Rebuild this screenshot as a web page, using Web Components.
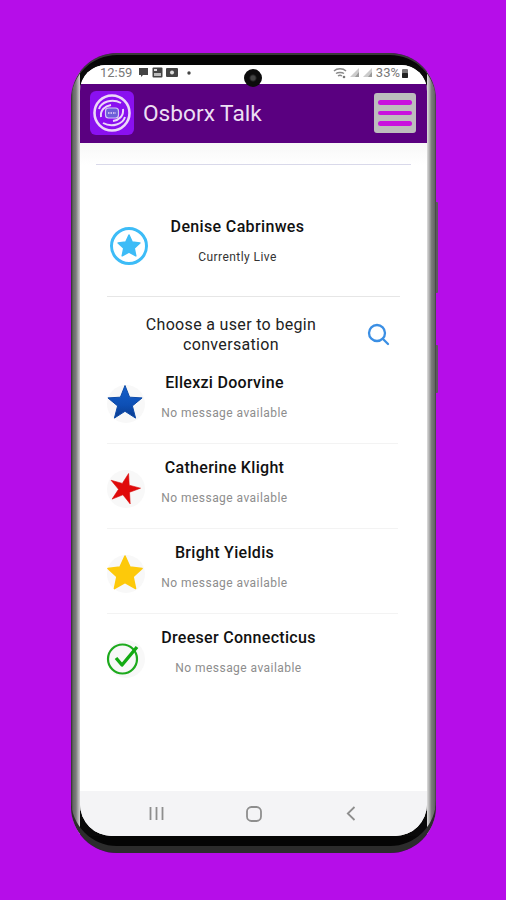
<!DOCTYPE html>
<html><head><meta charset="utf-8"><style>
html,body{margin:0;height:900px;overflow:hidden;background:#b60de9;font-family:Roboto,"Liberation Sans",sans-serif}
body{padding-top:53px;box-sizing:border-box;display:flex;justify-content:center}
</style></head><body>
<phone-frame>
  <status-bar slot="status"></status-bar>
  <app-bar slot="appbar" title="Osborx Talk"></app-bar>
  <live-row name="Denise Cabrinwes" status="Currently Live"></live-row>
  <choose-row>Choose a user to begin conversation</choose-row>
  <user-row name="Ellexzi Doorvine" icon="blue"></user-row>
  <user-row name="Catherine Klight" icon="red"></user-row>
  <user-row name="Bright Yieldis" icon="yellow"></user-row>
  <user-row name="Dreeser Connecticus" icon="check" last></user-row>
  <nav-bar slot="nav"></nav-bar>
</phone-frame>
<script>
const def=(n,html)=>customElements.define(n,class extends HTMLElement{
  connectedCallback(){if(this.shadowRoot)return;const r=this.attachShadow({mode:'open'});r.innerHTML=typeof html==='function'?html(this):html;}
});
const star=(cx,cy,R,r,rot=0)=>{let p=[];for(let i=0;i<10;i++){const a=(-90+rot+36*i)*Math.PI/180,q=i%2?r:R;p.push((cx+q*Math.cos(a)).toFixed(1)+','+(cy+q*Math.sin(a)).toFixed(1));}return p.join(' ');};
def('phone-frame',`<style>
:host{display:block;width:365px;height:800px;position:relative;margin-left:1px}
.body{box-sizing:border-box;width:365px;height:800px;border-radius:46px;padding:12px 9px 17px;
background:
 linear-gradient(90deg,transparent 8px,#050505 34px,#050505 331px,transparent 357px) top/100% 12px no-repeat,
 linear-gradient(90deg,transparent 8px,#050505 34px,#050505 331px,transparent 357px) bottom/100% 17px no-repeat,
 linear-gradient(90deg,#2e2e2e 0,#666 2px,#7c7c7c 5px,#aaa 7px,#d4d4d4 9px,#0a0a0a 9.5px) left/50% 100% no-repeat,
 linear-gradient(270deg,#2e2e2e 0,#666 2px,#7c7c7c 5px,#aaa 7px,#d4d4d4 9px,#0a0a0a 9.5px) right/50% 100% no-repeat;
 box-shadow:inset 0 2px 0 #3a3a3a,inset 0 -7px 0 #2c2c2c}
.screen{width:347px;height:771px;border-radius:26px 26px 32px 32px;overflow:hidden;background:#fff;display:flex;flex-direction:column;position:relative}
main{flex:1;display:flex;flex-direction:column;min-height:0}
.cam{position:absolute;left:164px;top:4px;width:18px;height:18px;border-radius:50%;background:radial-gradient(circle,#444 0 2px,#0c0c0c 4px);z-index:2}
.btn{position:absolute;left:365px;width:2px;background:#5b5b5b;border-radius:0 1px 1px 0}
</style>
<div class="btn" style="top:149px;height:91px"></div><div class="btn" style="top:292px;height:48px"></div>
<div class="body"><div class="screen"><div class="cam"></div>
<slot name="status"></slot><slot name="appbar"></slot><main><slot></slot></main><slot name="nav"></slot></div></div>`);
def('status-bar',`<style>
:host{display:flex;align-items:center;height:19px;box-sizing:border-box;background:#fff;padding:0 19px 4px 20px;font:13px Roboto,sans-serif;color:#777;flex:none}
.ic{display:flex;gap:3px;margin-left:6px;align-items:center}
.sp{flex:1}
.r{display:flex;gap:2px;align-items:center}
svg{display:block}
</style>
<span>12:59</span>
<span class="ic">
<svg width="11" height="11" viewBox="0 0 11 11"><path d="M1 1h9v7H5L3 10V8H1z" fill="#444"/></svg>
<svg width="11" height="11" viewBox="0 0 11 11"><rect x="0.5" y="0.5" width="10" height="10" rx="1" fill="#444"/><rect x="2" y="2" width="3" height="2" fill="#ddd"/><rect x="2" y="6" width="7" height="3" fill="#bbb"/></svg>
<svg width="12" height="11" viewBox="0 0 12 11"><rect y="1" width="12" height="9" rx="1" fill="#444"/><circle cx="6" cy="5.5" r="2" fill="#ddd"/></svg>
<svg style="margin-left:6px" width="4" height="4"><circle cx="2" cy="2" r="1.7" fill="#444"/></svg>
</span>
<span class="sp"></span>
<span class="r">
<svg width="14" height="12" viewBox="0 0 14 12"><path d="M1 4C4 1 10 1 13 4M3 6.5C5 5 9 5 11 6.5M5 9C6 8.300 8 8.300 9 9" stroke="#888" stroke-width="1.500" fill="none"/><circle cx="11" cy="10" r="1.300" fill="#777"/></svg>
<svg width="11" height="11" viewBox="0 0 11 11"><path d="M10 1v9H1z" fill="#ccc"/><path d="M10 5v5H6z" fill="#999"/></svg>
<svg width="11" height="11" viewBox="0 0 11 11"><path d="M10 1v9H1z" fill="#ccc"/><path d="M10 5v5H6z" fill="#999"/></svg>
<span style="margin-left:1px">33%</span>
<svg width="6" height="10" viewBox="0 0 6 10"><rect x="0" y="1" width="6" height="9" rx="1" fill="#777"/><rect x="0" y="5" width="6" height="5" rx="1" fill="#222"/></svg>
</span>`);
def('app-bar',h=>`<style>
:host{display:flex;align-items:center;height:59px;background:#5a0080;padding:0 11px 0 10px;flex:none;box-sizing:border-box}
.logo{width:44px;height:44px;border-radius:6px;background:#8a10f0;display:flex;align-items:center;justify-content:center;flex:none;margin-top:-1px}
h1{font:400 22.7px Roboto,sans-serif;color:#ecdff3;margin:0 0 0 9px;flex:1}
.menu{width:42px;height:40px;border-radius:3px;background:#bdbdbd;display:flex;flex-direction:column;justify-content:center;gap:6px;padding:0 4px;box-sizing:border-box;margin-top:-1px}
.menu i{display:block;height:4.500px;border-radius:3px;background:#c911de}
</style>
<div class="logo"><svg width="40" height="40" viewBox="0 0 40 40" fill="none" stroke="#ecd8f8">
<circle cx="20" cy="20" r="17.500" stroke-width="2.600"/>
<path d="M7 16C9 9 20 5 29 10" stroke-width="2"/>
<path d="M33 24C31 31 20 35 11 30" stroke-width="2"/>
<path d="M9 24C8 17 13 13 19 12" stroke-width="2"/><path d="M31 16C32 23 27 27 21 28" stroke-width="2"/>
<rect x="13.500" y="15" width="13" height="10" rx="3" fill="#6d5fd8" stroke="#d6c9f5" stroke-width="1.200"/>
<path d="M16 20h8" stroke="#e9d3f7" stroke-width="1.500" stroke-dasharray="1.500 1"/></svg></div>
<h1>${h.getAttribute('title')}</h1>
<div class="menu"><i></i><i></i><i></i></div>`);
def('live-row',h=>`<style>
:host{display:block;flex:none;background:linear-gradient(#f7f7f7,#fff 22px)}
.rule{height:21px;margin:0 16px 0 16px;border-bottom:1px solid #d9d9ea}
.row{display:flex;margin:0 27px 0 27px;height:131px;border-bottom:1px solid #e6e6e6;align-items:flex-start}
svg{display:block;margin:61px 0 0 2px;flex:none}
.t{flex:1;text-align:center;padding:0 74px 0 0}
.n{font:500 16px/20px Roboto,sans-serif;color:#111;margin-top:52px;letter-spacing:.35px}
.s{font:400 12px/16px Roboto,sans-serif;color:#333;margin-top:12px;letter-spacing:.45px}
</style>
<div class="rule"></div>
<div class="row"><svg width="40" height="40" viewBox="0 0 40 40"><circle cx="20" cy="20" r="17.500" fill="#fff" stroke="#3dbcf7" stroke-width="3"/><polygon points="${star(20,20.500,11.500,5.500)}" fill="#3dbcf7" stroke="#3dbcf7" stroke-width="1.500" stroke-linejoin="round"/></svg>
<div class="t"><div class="n">${h.getAttribute('name')}</div><div class="s">${h.getAttribute('status')}</div></div></div>`);
def('choose-row',`<style>
:host{display:flex;flex:none;align-items:center;height:62px;box-sizing:border-box;padding:14px 37px 0 58px}
.t{flex:1;font:400 16px/20px Roboto,sans-serif;color:#222;text-align:center;padding:0 42px 0 0;letter-spacing:.33px}
svg{display:block;flex:none;margin-top:-2px}
</style><div class="t"><slot></slot></div>
<svg width="24" height="24" viewBox="0 0 24 24" fill="none" stroke="#3b8fe4" stroke-width="2.300" stroke-linecap="round"><circle cx="11" cy="11" r="8"/><path d="M17 17l5 5"/></svg>`);
const icons={
blue:`<defs><linearGradient id="g" x1="0" y1="0" x2="0" y2="1"><stop offset="0" stop-color="#1560cc"/><stop offset=".6" stop-color="#0d4fb4"/><stop offset="1" stop-color="#0a3a8c"/></linearGradient></defs><polygon points="${star(19,19.500,18,7.800)}" fill="url(#g)" stroke="#0c4aa8" stroke-width="1" stroke-linejoin="round"/>`,
red:`<polygon points="${star(18.500,20,16,6,15)}" fill="#e00a0a" stroke="#d80808" stroke-width=".6"/>`,
yellow:`<polygon points="${star(19,20,18,8.500)}" fill="#fdc90a" stroke="#fdc90a" stroke-width="1.500" stroke-linejoin="round"/>`,
check:`<circle cx="16.500" cy="20" r="14.500" fill="none" stroke="#1daa1d" stroke-width="2.200"/><path d="M10 19l6 7L31 8" fill="none" stroke="#12aa12" stroke-width="3.400" stroke-linejoin="round"/>`};
def('user-row',h=>{const ic=h.getAttribute('icon'),last=h.hasAttribute('last');
const chk=ic==='check';
return `<style>
:host{display:flex;flex:none;height:85px;box-sizing:border-box;margin:0 29px 0 27px;${last?'':'border-bottom:1px solid #f3f3f3'}}
.a{width:38px;height:38px;border-radius:50%;background:#f8f8f8;flex:none;margin-top:26px;position:relative}
svg{display:block;position:absolute;left:-1px;top:-1px}
.t{margin-left:16px;width:${chk?155:127}px;text-align:center}
.n{font:500 16px/20px Roboto,sans-serif;color:#111;margin-top:14px;letter-spacing:.3px;white-space:nowrap}
.s{font:400 12px/16px Roboto,sans-serif;color:#8d8d8d;margin-top:12px;letter-spacing:.45px;white-space:nowrap}
</style>
<div class="a"><svg width="40" height="40" viewBox="0 0 40 40">${icons[ic]}</svg></div>
<div class="t"><div class="n">${h.getAttribute('name')}</div><div class="s">No message available</div></div>`});
def('nav-bar',`<style>
:host{display:flex;flex:none;height:45px;background:#f4f4f6;align-items:center;padding:0 71px 0 69px;justify-content:space-between;box-sizing:border-box}
svg{display:block}
</style>
<svg width="15" height="15" viewBox="0 0 15 15" stroke="#8e8e8e" stroke-width="1.800" fill="none"><path d="M1.500 1v13M7.500 1v13M13.500 1v13"/></svg>
<svg style="margin-left:-3px" width="16" height="16" viewBox="0 0 16 16" fill="none" stroke="#8e8e8e" stroke-width="1.800"><rect x="1" y="1" width="14" height="14" rx="4.500"/></svg>
<svg width="10" height="15" viewBox="0 0 10 15" fill="none" stroke="#8e8e8e" stroke-width="1.800"><path d="M8.500 1L1.800 7.500L8.500 14"/></svg>`);
</script>
</body></html>
